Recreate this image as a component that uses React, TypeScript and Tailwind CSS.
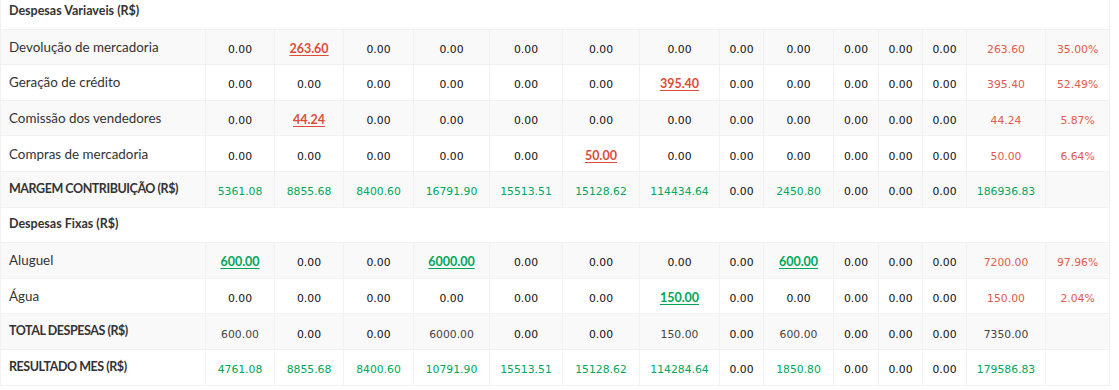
import React from 'react';

type Cell = { v: string; kind?: 'red' | 'green' | 'redLink' | 'greenLink' | 'gray' };

type Row =
  | { type: 'section'; label: string }
  | { type: 'line'; label: string; bold?: boolean; cells: Cell[] };

const widths = [205, 69, 69, 70, 76, 73, 77, 80, 44, 70, 45, 44, 44, 79, 64];

const z: Cell = { v: '0.00' };

const rows: Row[] = [
  { type: 'section', label: 'Despesas Variaveis (R$)' },
  {
    type: 'line',
    label: 'Devolução de mercadoria',
    cells: [z, { v: '263.60', kind: 'redLink' }, z, z, z, z, z, z, z, z, z, z, { v: '263.60', kind: 'red' }, { v: '35.00%', kind: 'red' }],
  },
  {
    type: 'line',
    label: 'Geração de crédito',
    cells: [z, z, z, z, z, z, { v: '395.40', kind: 'redLink' }, z, z, z, z, z, { v: '395.40', kind: 'red' }, { v: '52.49%', kind: 'red' }],
  },
  {
    type: 'line',
    label: 'Comissão dos vendedores',
    cells: [z, { v: '44.24', kind: 'redLink' }, z, z, z, z, z, z, z, z, z, z, { v: '44.24', kind: 'red' }, { v: '5.87%', kind: 'red' }],
  },
  {
    type: 'line',
    label: 'Compras de mercadoria',
    cells: [z, z, z, z, z, { v: '50.00', kind: 'redLink' }, z, z, z, z, z, z, { v: '50.00', kind: 'red' }, { v: '6.64%', kind: 'red' }],
  },
  {
    type: 'line',
    label: 'MARGEM CONTRIBUIÇÃO (R$)',
    bold: true,
    cells: [
      { v: '5361.08', kind: 'green' },
      { v: '8855.68', kind: 'green' },
      { v: '8400.60', kind: 'green' },
      { v: '16791.90', kind: 'green' },
      { v: '15513.51', kind: 'green' },
      { v: '15128.62', kind: 'green' },
      { v: '114434.64', kind: 'green' },
      z,
      { v: '2450.80', kind: 'green' },
      z,
      z,
      z,
      { v: '186936.83', kind: 'green' },
      { v: '' },
    ],
  },
  { type: 'section', label: 'Despesas Fixas (R$)' },
  {
    type: 'line',
    label: 'Aluguel',
    cells: [
      { v: '600.00', kind: 'greenLink' },
      z,
      z,
      { v: '6000.00', kind: 'greenLink' },
      z,
      z,
      z,
      z,
      { v: '600.00', kind: 'greenLink' },
      z,
      z,
      z,
      { v: '7200.00', kind: 'red' },
      { v: '97.96%', kind: 'red' },
    ],
  },
  {
    type: 'line',
    label: 'Água',
    cells: [z, z, z, z, z, z, { v: '150.00', kind: 'greenLink' }, z, z, z, z, z, { v: '150.00', kind: 'red' }, { v: '2.04%', kind: 'red' }],
  },
  {
    type: 'line',
    label: 'TOTAL DESPESAS (R$)',
    bold: true,
    cells: [
      { v: '600.00', kind: 'gray' },
      z,
      z,
      { v: '6000.00', kind: 'gray' },
      z,
      z,
      { v: '150.00', kind: 'gray' },
      z,
      { v: '600.00', kind: 'gray' },
      z,
      z,
      z,
      { v: '7350.00', kind: 'gray' },
      { v: '' },
    ],
  },
  {
    type: 'line',
    label: 'RESULTADO MES (R$)',
    bold: true,
    cells: [
      { v: '4761.08', kind: 'green' },
      { v: '8855.68', kind: 'green' },
      { v: '8400.60', kind: 'green' },
      { v: '10791.90', kind: 'green' },
      { v: '15513.51', kind: 'green' },
      { v: '15128.62', kind: 'green' },
      { v: '114284.64', kind: 'green' },
      z,
      { v: '1850.80', kind: 'green' },
      z,
      z,
      z,
      { v: '179586.83', kind: 'green' },
      { v: '' },
    ],
  },
];

const num = "font-['DejaVu_Sans',sans-serif] text-[10.8px]";

function Value({ cell }: { cell: Cell }): React.ReactElement {
  if (cell.kind === 'redLink') {
    return <a href="#" className="font-['Lato',sans-serif] text-[12.5px] font-bold text-[#dd4b39] underline underline-offset-2">{cell.v}</a>;
  }
  if (cell.kind === 'greenLink') {
    return <a href="#" className="font-['Lato',sans-serif] text-[12.5px] font-bold text-[#00a65a] underline underline-offset-2">{cell.v}</a>;
  }
  const color =
    cell.kind === 'red' ? 'text-[#e15a4a]' : cell.kind === 'green' ? 'text-[#00a65a]' : cell.kind === 'gray' ? 'text-[#444]' : 'text-[#111]';
  return <span className={`${num} ${color}`}>{cell.v}</span>;
}

export default function App(): React.ReactElement {
  return (
    <div className="w-[1119px] h-[390px] overflow-hidden bg-white font-['Lato',sans-serif] text-[#333]">
      <table className="-mt-[7px] w-[1110px] table-fixed border-collapse">
        <colgroup>
          {widths.map((w, i) => (
            <col key={i} style={{ width: w }} />
          ))}
        </colgroup>
        <tbody>
          {rows.map((row, i) => (
            <tr key={i} className={`h-[35.6px] ${i % 2 === 1 ? 'bg-[#f9f9f9]' : 'bg-white'}`}>
              {row.type === 'section' ? (
                <td colSpan={15} className="border border-[#f1f1f1] px-2 text-[12.5px] font-bold">
                  {row.label}
                </td>
              ) : (
                <>
                  <td
                    className={`border border-[#f1f1f1] px-2 ${row.bold ? 'text-[12.5px] font-bold tracking-[-0.45px]' : 'text-[13.4px]'}`}
                  >
                    {row.label}
                  </td>
                  {row.cells.map((c, j) => (
                    <td key={j} className="border border-[#f1f1f1] p-0 text-center">
                      <Value cell={c} />
                    </td>
                  ))}
                </>
              )}
            </tr>
          ))}
        </tbody>
      </table>
    </div>
  );
}
